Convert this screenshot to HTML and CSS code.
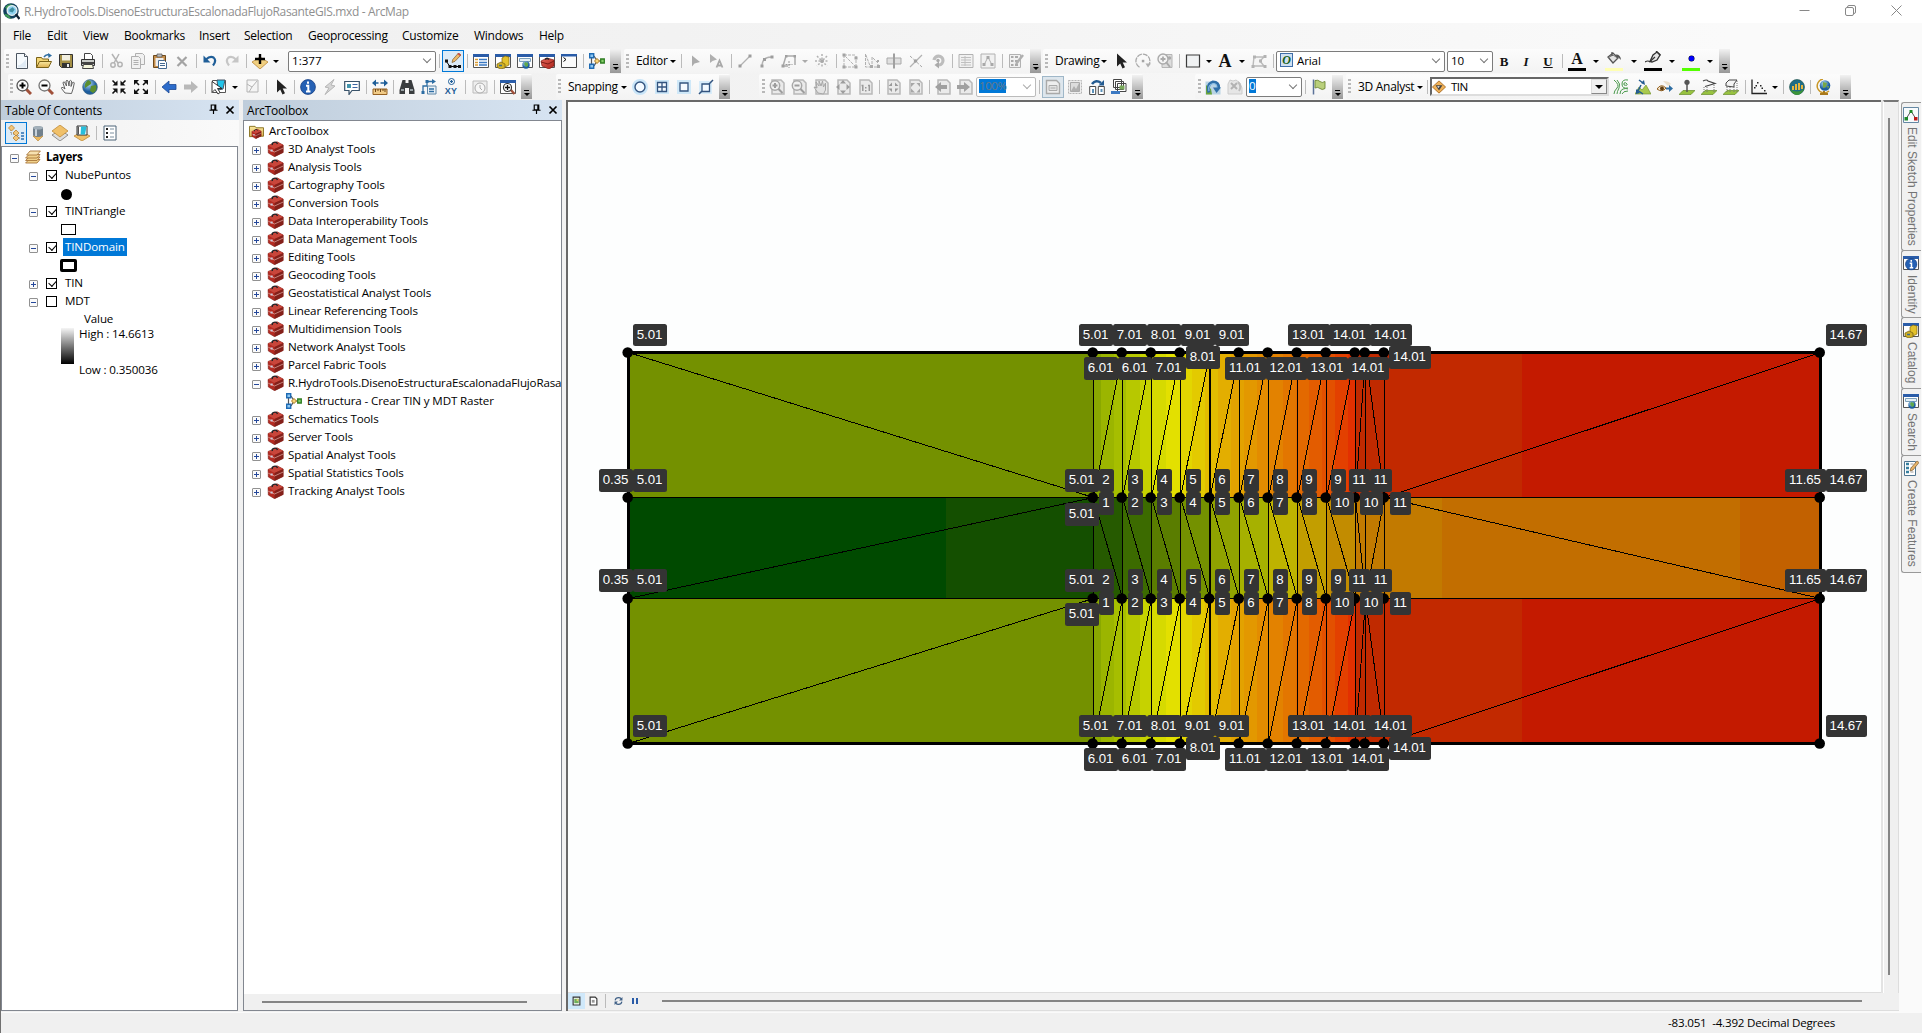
FILE: index.html
```html
<!DOCTYPE html>
<html lang="en">
<head>
<meta charset="utf-8">
<title>R.HydroTools.DisenoEstructuraEscalonadaFlujoRasanteGIS.mxd - ArcMap</title>
<link rel="stylesheet" href="styles.css">
</head>
<body>
<svg class="defs" width="0" height="0">
<defs>
<linearGradient id="gRed" x1="0" y1="0" x2="1" y2="1"><stop offset="0" stop-color="#e8695c"/><stop offset="1" stop-color="#a81f17"/></linearGradient>
<linearGradient id="gGold" x1="0" y1="0" x2="0" y2="1"><stop offset="0" stop-color="#fbeaa0"/><stop offset="1" stop-color="#dcae4e"/></linearGradient>
<radialGradient id="gSea" cx=".4" cy=".3"><stop offset="0" stop-color="#b4dcf5"/><stop offset="1" stop-color="#1c5d9e"/></radialGradient>
</defs>
<symbol id="i-app" viewBox="0 0 16 16"><circle cx="7.5" cy="7.5" r="7.3" fill="#12405e"/><path d="M2 4q4-5 9-1l-3 3-4 1zM1 10l4 1 3 4q-5-1-7-5z" fill="#3d9a55"/><circle cx="8.5" cy="7" r="4.6" fill="#8fd3f0" stroke="#e6eef2" stroke-width="1.2"/><path d="M6 6l3-2 2 2-2 3-3-1z" fill="#3f8ea0"/><path d="M12 10.500l3.500 4.500" stroke="#123" stroke-width="2.200"/></symbol>
<symbol id="i-new" viewBox="0 0 16 16"><path d="M2.500.5h8l3 3v12h-11z" fill="#f6fafd" stroke="#4b5560"/><path d="M10.500.5v3h3" fill="#fff" stroke="#4b5560"/><path d="M4 12q3 1 8-6v8.500H4z" fill="#dfeaf4"/></symbol>
<symbol id="i-open" viewBox="0 0 16 16"><path d="M.5 14.500v-10h5l1 1.500h6v3" fill="#f4d675" stroke="#7a6218"/><path d="M.5 14.500L3.500 8.500h12l-3 6z" fill="url(#gGold)" stroke="#7a6218"/><path d="M8 4q2-3 5-2" stroke="#2d6da3" stroke-width="1.600" fill="none"/><path d="M12 0l4 2.500L12.500 5z" fill="#2d6da3"/></symbol>
<symbol id="i-save" viewBox="0 0 16 16"><path d="M1.500 1.500h13v13h-11l-2-2z" fill="#a49047" stroke="#333"/><path d="M4 2h8v5.500H4z" fill="#f2efe0"/><path d="M4 10h8v4.500H4z" fill="#333"/><path d="M9 11h2v3H9z" fill="#eee"/></symbol>
<symbol id="i-print" viewBox="0 0 16 16"><path d="M4.500 6V.5h6l2 2V6" fill="#fff" stroke="#444"/><path d="M1.500 6.500h13v6h-13z" fill="#c9ccc8" stroke="#333"/><path d="M2 9h12v2H2z" fill="#444"/><path d="M3.500 11.500h9l1 4h-11z" fill="#f5f6dc" stroke="#444"/></symbol>
<symbol id="i-cut" viewBox="0 0 16 16"><path d="M4 1l6 9M11 1L6 10" stroke="#b4b4b4" stroke-width="1.500"/><circle cx="5" cy="12" r="2.200" fill="none" stroke="#b4b4b4" stroke-width="1.500"/><circle cx="12" cy="11.500" r="2.200" fill="none" stroke="#b4b4b4" stroke-width="1.500"/></symbol>
<symbol id="i-copy" viewBox="0 0 16 16"><g fill="#f1f1f1" stroke="#b0b0b0"><path d="M5.500.5h7l2 2v9h-9z"/><path d="M1.500 3.500h7l2 2v10h-9z"/><path d="M3.500 7.500h5M3.500 9.500h5M3.500 11.500h5"/></g></symbol>
<symbol id="i-paste" viewBox="0 0 16 16"><path d="M1.500 2.500h12v12h-12z" fill="#c58e4b" stroke="#6d4a1e"/><path d="M5 1h5v3H5z" fill="#bbb" stroke="#555" stroke-width=".7"/><path d="M3.500 5h8v8h-8z" fill="#eee"/><path d="M6.500 7.500h6l2 2v6h-8z" fill="#fff" stroke="#456a92"/><path d="M8 10.500h5M8 12.500h5" stroke="#456a92"/></symbol>
<symbol id="i-del" viewBox="0 0 16 16"><path d="M3.500 4l9 9M12.500 4l-9 9" stroke="#a3a3a3" stroke-width="2.200"/></symbol>
<symbol id="i-undo" viewBox="0 0 16 16"><path d="M4 6.500q4-4 7.500-2 3.500 3-.5 8" fill="none" stroke="#1f5e98" stroke-width="2.200"/><path d="M1.500 2.500v7h7z" fill="#1f5e98"/></symbol>
<symbol id="i-redo" viewBox="0 0 16 16"><path d="M12 6.500q-4-4-7.500-2-3.500 3 .5 8" fill="none" stroke="#c6c6c6" stroke-width="2.200"/><path d="M14.500 2.500v7h-7z" fill="#c6c6c6"/></symbol>
<symbol id="i-add" viewBox="0 0 16 16"><path d="M0 9l8-5 8 5-8 7z" fill="#f0cf80" stroke="#b07b28" stroke-width=".7"/><path d="M8 1v10M3 6h10" stroke="#000" stroke-width="2.400"/></symbol>
<symbol id="i-sketch" viewBox="0 0 16 16"><path d="M1 8l4 5.500h9.500" fill="none" stroke="#000"/><path d="M0 6.500h3v3H0zM3.500 12h3v3h-3zM8.500 12h3v3h-3zM13 12h3v3h-3z" fill="#111"/><path d="M7 9.500l.8-3L13.500 0 16 2 10 8.300z" fill="#eeb868" stroke="#7b5a2a" stroke-width=".7"/><path d="M13 .5L15.500 2.500" stroke="#c44" stroke-width="1.600"/></symbol>
<symbol id="i-win" viewBox="0 0 16 16"><path d="M.5 1.500h15v13H.5z" fill="#fff" stroke="#555"/><path d="M0 1h16v3H0z" fill="#2a5ca8"/></symbol>
<symbol id="i-toc" viewBox="0 0 16 16"><use href="#i-win"/><path d="M2 6.500h3M2 9.500h3M2 12h3" stroke="#d89b35" stroke-width="1.500"/><path d="M6 6.500h8M6 9.500h8M6 12h8" stroke="#3a78c2" stroke-width="1.300"/></symbol>
<symbol id="i-cat" viewBox="0 0 16 16"><use href="#i-win"/><path d="M7 5l3-2 4 1v8l-4 2-3-1z" fill="#e4c22c" stroke="#7e6510" stroke-width=".7"/><path d="M2 11l4-2 4 2v4l-5 1-3-2z" fill="#d0b024" stroke="#6d5a14" stroke-width=".7"/><path d="M4 12.500h3" stroke="#3d6c8c" stroke-width="1.500"/></symbol>
<symbol id="i-search" viewBox="0 0 16 16"><use href="#i-win"/><path d="M2.500 5.500h11v3h-11z" fill="#e6f0f6" stroke="#7da0ba"/><circle cx="9" cy="12" r="3.700" fill="url(#gSea)"/><path d="M8 9l3 1v3l-2 1-2-3z" fill="#5fa74c"/></symbol>
<symbol id="i-atb" viewBox="0 0 16 16"><use href="#i-win"/><path d="M2 8l6-3 7 2v6l-5 3-7-3z" fill="url(#gRed)" stroke="#7c1c15" stroke-width=".7"/><path d="M2 9l7 2 6-3" fill="none" stroke="#7c1c15"/><path d="M6 6.500q2-2 4 0" fill="none" stroke="#222" stroke-width="1.200"/></symbol>
<symbol id="i-py" viewBox="0 0 16 16"><path d="M.5 1.500h15v13H.5z" fill="#fbfbfb" stroke="#444"/><path d="M0 1h16v2.500H0z" fill="#2a5ca8"/><path d="M2.500 4.500l2.500 2-2.500 2" fill="none" stroke="#000"/></symbol>
<symbol id="i-model" viewBox="0 0 16 16"><path d="M2.500 5v6M5 3l3 4.500M5 13l3-5M9 8h5" stroke="#555" stroke-width="1.200" fill="none"/><path d="M.7.7h4v4h-4zM.7 11.300h4v4h-4z" fill="#8cc6f2" stroke="#1e6bb4" stroke-width="1.400"/><path d="M8 5.500L10.500 8 8 10.500 5.500 8z" fill="#f9d57b" stroke="#a8781c"/><path d="M11.700 6h3.600v4h-3.600z" fill="#85cf6a" stroke="#2f7e22" stroke-width="1.300"/></symbol>
<symbol id="i-garrow" viewBox="0 0 16 16"><path d="M5 2.500v11L7.500 10.500 13 9z" fill="#acacac"/></symbol>
<symbol id="i-garrowA" viewBox="0 0 16 16"><path d="M1 1v9l2.500-2L8 6.500z" fill="#b0b0b0"/><path d="M7.500 14.500L10.500 7.500l3 7M8.500 12.500h4" fill="none" stroke="#a8a8a8" stroke-width="1.800"/></symbol>
<symbol id="i-gline" viewBox="0 0 16 16"><path d="M3 13L13 3" stroke="#b2b2b2" stroke-width="1.300"/><path d="M1.500 11.500h3v3h-3zM11.500 1.500h3v3h-3z" fill="#9d9d9d"/></symbol>
<symbol id="i-garc" viewBox="0 0 16 16"><path d="M3 13Q3 4 13 4" fill="none" stroke="#b2b2b2" stroke-width="1.300"/><path d="M1.500 11.500h3v3h-3zM4 5h3v3H4zM11.500 2.500h3v3h-3z" fill="#9d9d9d"/></symbol>
<symbol id="i-gtrace" viewBox="0 0 16 16"><path d="M2 13L5 3h9v9M2 13h5" fill="none" stroke="#aaa" stroke-width="1.500"/><path d="M.5 11.500h3v3h-3zM4 2h2.500v2.500H4zM12.500 2H15v2.500h-2.500z" fill="#a0a0a0"/><path d="M8 8v7M4.500 11.500h7" stroke="#999" stroke-dasharray="2 1"/></symbol>
<symbol id="i-gspark" viewBox="0 0 16 16"><path d="M8 1v14M1 8h14M3 3l10 10M13 3L3 13" stroke="#b2b2b2" stroke-width="1.500" stroke-dasharray="2 1.500"/><path d="M6.500 6.500h3v3h-3z" fill="#a8a8a8"/></symbol>
<symbol id="i-gtri" viewBox="0 0 16 16"><path d="M2 2v12h12zM2 2h11M14 3v11" fill="none" stroke="#b2b2b2" stroke-dasharray="3 1"/><path d="M.5.5h3v3h-3zM.5 12.500h3v3h-3zM12.500 12.500h3v3h-3zM12.500 3.500h3v3h-3z" fill="#a4a4a4"/></symbol>
<symbol id="i-gtri2" viewBox="0 0 16 16"><path d="M1.500 1v13h5zM8 4v10h6v-4z" fill="#f3f3f3" stroke="#b0b0b0" stroke-dasharray="3 1"/><path d="M6 12h3v3H6zM13 12h3v3h-3zM13 7h2v2h-2z" fill="#aaa"/></symbol>
<symbol id="i-gsplit" viewBox="0 0 16 16"><path d="M1 5h14v6H1z" fill="#e0e0e0" stroke="#a9a9a9"/><path d="M8 .5v15" stroke="#a0a0a0" stroke-width="2"/></symbol>
<symbol id="i-gx" viewBox="0 0 16 16"><path d="M2 14L14 2" stroke="#b2b2b2" stroke-width="1.300"/><path d="M2 3l12 11" stroke="#a8a8a8" stroke-dasharray="3 1.500"/><circle cx="7.500" cy="8" r="1.800" fill="#a0a0a0"/></symbol>
<symbol id="i-grot" viewBox="0 0 16 16"><path d="M4 7a4.500 4.500 0 1 1 5 5" fill="none" stroke="#bdbdbd" stroke-width="3.200"/><circle cx="8" cy="7.500" r="1.700" fill="#aaa"/><path d="M9 8.500v7l-4.500-3.500z" fill="#aaa"/></symbol>
<symbol id="i-gtable" viewBox="0 0 16 16"><path d="M1 1.500h14v13H1z" fill="#f1f1f1" stroke="#b2b2b2"/><path d="M3 4.500h10M3 7h10M3 9.500h10M3 12h10M7 3v10" stroke="#c0c0c0"/></symbol>
<symbol id="i-gvert" viewBox="0 0 16 16"><path d="M1 1h14v14H1z" fill="#f1f1f1" stroke="#b2b2b2"/><path d="M4 12l4-8 4 8" fill="none" stroke="#b0b0b0"/><path d="M2.500 10h3v3h-3zM6.500 3h3v3h-3zM10.500 10h3v3h-3z" fill="#a8a8a8"/></symbol>
<symbol id="i-gform" viewBox="0 0 16 16"><path d="M1.500 1.500h11v13h-11z" fill="#f1f1f1" stroke="#b2b2b2"/><path d="M3 4h2.500M3 8h2.500M3 12h2.500M7 4h3M7 8h3M7 12h3" stroke="#aaa" stroke-width="2"/><path d="M8 11L15 2" stroke="#b0b0b0" stroke-width="2.500"/></symbol>
<symbol id="i-ptr" viewBox="0 0 16 16"><path d="M4 .5v13l3.200-3 2.300 5 2.500-1.200L9.700 9.500H14z" fill="#222"/></symbol>
<symbol id="i-drot" viewBox="0 0 16 16"><path d="M4.500 14.200A7 7 0 1 1 14.300 11" fill="none" stroke="#a9a9a9" stroke-width="1.300" stroke-dasharray="5 1"/><path d="M6.800 6.800h2.500v2.500H6.800z" fill="#a5a5a5"/><path d="M10.500 10.500h5.500l-3 4z" fill="#b0b0b0"/></symbol>
<symbol id="i-dzoom" viewBox="0 0 16 16"><path d="M5 1.500h10v13H5z" fill="#ddd" stroke="#b5b5b5"/><circle cx="6" cy="6" r="5" fill="#f4f4f4" stroke="#aaa" stroke-width="1.400"/><path d="M6 3.500v5M3.500 6h5" stroke="#aaa" stroke-width="1.800"/><path d="M9 9l4 5" stroke="#aaa" stroke-width="2"/><circle cx="12.500" cy="5" r="1.700" fill="#aaa"/></symbol>
<symbol id="i-rect" viewBox="0 0 16 16"><path d="M1.500 2h13v12h-13z" fill="#f0f2f3" stroke="#3b3b3b" stroke-width="1.200"/></symbol>
<symbol id="i-dpoly" viewBox="0 0 16 16"><path d="M3 4h10L9 8l4 5H2z" fill="#f5f5f5" stroke="#bbb" stroke-width="1.400"/><path d="M2 2.500h3v3H2zM12.500 2h3v3h-3zM8 6.500h3v3H8zM.5 12h3v3h-3zM12.500 12h3v3h-3z" fill="#b3b3b3"/></symbol>
<symbol id="i-bucket" viewBox="0 0 16 14"><path d="M2 6l5-4 5 5-5 5z" fill="#e4e4e4" stroke="#555" stroke-width="1.300"/><path d="M2.500 6.500L7 4l4.500 3" fill="none" stroke="#777"/><path d="M6 5V1" stroke="#555" stroke-width="1.300"/><path d="M9.500 3.500q5-.5 5.500 5.500Q12.500 6 11 6z" fill="#555"/></symbol>
<symbol id="i-pen" viewBox="0 0 16 14"><path d="M0 11q3-2 5 0" fill="none" stroke="#333" stroke-width="1.200"/><path d="M5 10.500L8 4l4-3 3 3-3 5-5 2z" fill="#e5e5e5" stroke="#333" stroke-width="1.300"/><path d="M5 10.500L10 6M11 0l4.500 4" stroke="#333" stroke-width="1.200"/></symbol>
<symbol id="i-zin" viewBox="0 0 16 16"><path d="M10 10l5 5" stroke="#a0503a" stroke-width="3"/><circle cx="6.500" cy="6.500" r="5.500" fill="#fcfcfc" stroke="#555" stroke-width="1.300"/><path d="M6.500 3.500v6M3.500 6.500h6" stroke="#000" stroke-width="2"/></symbol>
<symbol id="i-zout" viewBox="0 0 16 16"><path d="M10 10l5 5" stroke="#a0503a" stroke-width="3"/><circle cx="6.500" cy="6.500" r="5.500" fill="#fcfcfc" stroke="#777" stroke-width="1.300"/><path d="M3.500 6.500h6" stroke="#000" stroke-width="2"/></symbol>
<symbol id="i-hand" viewBox="0 0 16 16"><path d="M5 14L1.500 9.500Q1 8 3 8.500L5 10 3 4q0-1.500 1.500-1L6.500 7 6 2q1-1.500 2 0l1 5 .5-5q1-1.200 2 0L11 7.500l1.500-4q1.500-.8 1.800.5L13 10l-1.500 4.500z" fill="#fafafa" stroke="#555" stroke-width=".9"/></symbol>
<symbol id="i-globe" viewBox="0 0 16 16"><circle cx="8" cy="8" r="7.400" fill="url(#gSea)" stroke="#42657e" stroke-width=".6"/><path d="M6 1q4 1 3 4L6 7 3 9Q2 4 6 1zM9 7l5-1q2 5-3 8l-3-2z" fill="#5c8f2e"/></symbol>
<symbol id="i-in4" viewBox="0 0 16 16"><path d="M1.500 1.500l4 4M14.500 1.500l-4 4M1.500 14.500l4-4M14.500 14.500l-4-4" stroke="#111" stroke-width="1.600"/><path d="M6.500 1.500v5h-5zM9.500 1.500v5h5zM6.500 14.500v-5h-5zM9.500 14.500v-5h5z" fill="#111"/></symbol>
<symbol id="i-out4" viewBox="0 0 16 16"><path d="M2 2l4 4M14 2l-4 4M2 14l4-4M14 14l-4-4" stroke="#111" stroke-width="1.600"/><path d="M1 6V1h5zM15 6V1h-5zM1 10v5h5zM15 10v5h-5z" fill="#111"/></symbol>
<symbol id="i-back" viewBox="0 0 16 16"><path d="M1 8l7-6v3.500h7v5H8V14z" fill="#2c6ccb" stroke="#1c4792" stroke-width=".8"/></symbol>
<symbol id="i-fwd" viewBox="0 0 16 16"><path d="M15 8L8 2v3.500H1v5h7V14z" fill="#b9b9b9"/></symbol>
<symbol id="i-sel" viewBox="0 0 16 16"><path d="M1.500 1.500h13v12h-13z" fill="#fff" stroke="#555"/><path d="M6 1h8l-2 9-5 1z" fill="#22c4ea" stroke="#456"/><path d="M1 2.500v11l3-3 3 4.500 2-1.500L6.500 9.500H11z" fill="#fff" stroke="#222" stroke-width=".9"/></symbol>
<symbol id="i-clear" viewBox="0 0 16 16"><path d="M3 1h11v12H3zM3 5l5 3 5-6M8 8l-3 5" fill="#f4f4f4" stroke="#b4b4b4"/></symbol>
<symbol id="i-info" viewBox="0 0 16 16"><circle cx="8" cy="8" r="7.400" fill="#2561b4" stroke="#163f83" stroke-width=".8"/><path d="M8 2.500v2.200M6 6.700h2.300V12M6 12.500h4.500" stroke="#fff" stroke-width="2" fill="none"/></symbol>
<symbol id="i-bolt" viewBox="0 0 16 16"><path d="M12 .5L3 8l4 1-4 6.500L13 7 9 6z" fill="#d5d5d5" stroke="#b5b5b5"/></symbol>
<symbol id="i-popup" viewBox="0 0 16 16"><path d="M.7 2.500h14.600v9H8l-3 4v-4H.7z" fill="#fff" stroke="#39536a" stroke-width="1.200"/><path d="M3 5h4v4H3z" fill="#4295ad"/><path d="M8.500 5.500h5M8.500 8.500h5" stroke="#3b66a5"/></symbol>
<symbol id="i-measure" viewBox="0 0 16 16"><path d="M1 10h14v5.500H1z" fill="#f0ca86" stroke="#956021"/><path d="M3.500 10v3M6 10v2M8.500 10v3M11 10v2M13 10v3" stroke="#6d4618"/><path d="M0 4l4-3.500v7zM16 4l-4-3.500v7z" fill="#1f5e98"/><path d="M3 4h10" stroke="#1f5e98" stroke-width="1.500" stroke-dasharray="3.500 2"/></symbol>
<symbol id="i-binoc" viewBox="0 0 16 16"><path d="M3.500 1h3v3h3V1h3l3 10v4h-5.500V9h-4v6H.5v-4z" fill="#3a3d3f"/><path d="M2 11h3M11 11h3" stroke="#b8c2c8" stroke-width="1.500"/></symbol>
<symbol id="i-route" viewBox="0 0 16 16"><path d="M6.500 7h8.500v8H6.500z" fill="#e9f1f7" stroke="#5e86a6"/><path d="M2 13V7h4V2.500h6M8 10h5M8 12.500h5" fill="none" stroke="#2d6da3" stroke-width="1.300"/><path d="M.5 12h3v3h-3zM4.500 1h3v3h-3zM11 0l4 2.500L11 5z" fill="#2d6da3"/></symbol>
<symbol id="i-clock" viewBox="0 0 16 16"><path d="M1 2h14v12H1z" fill="#eee" stroke="#bcbcbc"/><circle cx="8" cy="9" r="5" fill="#f7f7f7" stroke="#ababab"/><path d="M8 6v3l2 2" fill="none" stroke="#ababab"/></symbol>
<symbol id="i-viewer" viewBox="0 0 16 16"><use href="#i-win"/><path d="M10 10l4.500 5" stroke="#a0503a" stroke-width="2.500"/><circle cx="7.500" cy="8.500" r="4" fill="#fff" stroke="#333" stroke-width="1.200"/><path d="M7.500 6v5M5 8.500h5" stroke="#111" stroke-width="1.300"/></symbol>
<symbol id="i-snc" viewBox="0 0 16 16"><circle cx="8" cy="8" r="6" fill="none" stroke="#c9e5f8" stroke-width="4"/><circle cx="8" cy="8" r="5" fill="#f4faff" stroke="#33547f" stroke-width="1.400"/></symbol>
<symbol id="i-sne" viewBox="0 0 16 16"><path d="M1 1h14v14H1z" fill="#cfe8f8"/><path d="M3.500 3.500h9v9h-9zM8 3v10M3 8h10" fill="#f4faff" stroke="#33547f" stroke-width="1.300"/></symbol>
<symbol id="i-snv" viewBox="0 0 16 16"><path d="M1 1h14v14H1z" fill="#cfe8f8"/><path d="M4 4h8v8H4z" fill="#f4faff" stroke="#33547f" stroke-width="1.300"/></symbol>
<symbol id="i-sng" viewBox="0 0 16 16"><path d="M1 2h13v13H1z" fill="#d8ecf9"/><path d="M4 5h7.500v7.500H4z" fill="#f4faff" stroke="#33547f" stroke-width="1.300"/><path d="M1 15l3-3M11 5l4-4" stroke="#33547f" stroke-width="1.500"/></symbol>
<symbol id="i-page" viewBox="0 0 16 16"><path d="M3 1h9l3 3v11H3z" fill="#eaeaea" stroke="#b8b8b8" stroke-width="1.500"/></symbol>
<symbol id="i-pzin" viewBox="0 0 16 16"><use href="#i-page"/><circle cx="6" cy="6.500" r="4.700" fill="#f2f2f2" stroke="#a8a8a8" stroke-width="1.500"/><path d="M6 4v5M3.500 6.500h5M9.500 10l4 4" stroke="#9d9d9d" stroke-width="2"/></symbol>
<symbol id="i-pzout" viewBox="0 0 16 16"><use href="#i-page"/><circle cx="6" cy="6.500" r="4.700" fill="#f2f2f2" stroke="#a8a8a8" stroke-width="1.500"/><path d="M3.500 6.500h5M9.500 10l4 4" stroke="#9d9d9d" stroke-width="2"/></symbol>
<symbol id="i-phand" viewBox="0 0 16 16"><use href="#i-page"/><path d="M5 14L1 8l3 1-1-6 3 4V2l2 5 1.500-5 1 6 2-4v7l-2 4z" fill="#e3e3e3" stroke="#a6a6a6"/></symbol>
<symbol id="i-pfull" viewBox="0 0 16 16"><use href="#i-page"/><path d="M8 1l3 3.500H5zM8 15l3-3.500H5zM1 8l3.500-3v6zM15 8l-3.500-3v6z" fill="#9d9d9d"/></symbol>
<symbol id="i-p11" viewBox="0 0 16 16"><use href="#i-page"/><path d="M4.500 6.500h1.300V12M11 6.500h1.300V12" fill="none" stroke="#999" stroke-width="1.500"/><path d="M8 8h1.500v1.500H8zM8 11h1.500v1.500H8z" fill="#999"/></symbol>
<symbol id="i-pin" viewBox="0 0 16 16"><use href="#i-page"/><path d="M7 3.500V7H3.500zM10 3.500V7h3.500zM7 13v-3.500H3.500zM10 13v-3.500h3.500z" fill="#999"/></symbol>
<symbol id="i-pout" viewBox="0 0 16 16"><use href="#i-page"/><path d="M4 8V4h4zM13 8V4H9.500zM4 9.500v4h4zM13 9.500v4H9.500z" fill="#a6a6a6"/></symbol>
<symbol id="i-pback" viewBox="0 0 16 16"><use href="#i-page"/><path d="M0 8l6-5v3h6v4H6v3z" fill="#a0a0a0"/></symbol>
<symbol id="i-pfwd" viewBox="0 0 16 16"><use href="#i-page"/><path d="M13 8L7 3v3H0v4h7v3z" fill="#a0a0a0"/></symbol>
<symbol id="i-draft" viewBox="0 0 16 16"><path d="M1.500 1.500h10l3 3v10h-13z" fill="#eee" stroke="#a9a9a9" stroke-width="1.400"/><path d="M4 6.500h8v5H4zM5.500 9h5" fill="#e3e3e3" stroke="#aaa"/></symbol>
<symbol id="i-focus" viewBox="0 0 16 16"><path d="M1.500 1.500h13v13h-13z" fill="#eee" stroke="#b5b5b5" stroke-dasharray="2 1"/><path d="M3.500 3.500h9v9h-9z" fill="#ddd" stroke="#aaa"/><path d="M4 12l3-5 2 3 3-6v8z" fill="#b0b0b0"/></symbol>
<symbol id="i-swap" viewBox="0 0 16 16"><path d="M.7 7.500h6v8h-6zM9.300 7.500h6v8h-6z" fill="#fff" stroke="#4a4a4a"/><path d="M3 10h2v4H3zM11.500 10h2v3h-2z" fill="#5b91b9"/><path d="M3 5q4-5 9-1" fill="none" stroke="#235b91" stroke-width="2.600"/><path d="M9.500 6.500h5.500V1z" fill="#235b91"/></symbol>
<symbol id="i-ddp" viewBox="0 0 16 16"><g fill="#fff" stroke="#454545"><path d="M2.500.5h8v8h-8zM4.500 2.500h8v8h-8zM6.500 4.500h8.500v8H6.500z"/></g><path d="M8.500 6.500h5v4h-5z" fill="#78a85a"/><path d="M0 12h9v3H0z" fill="#3a78c2"/></symbol>
<symbol id="i-refresh" viewBox="0 0 16 16"><path d="M.5 2.500h9l6 6v7H.5z" fill="#b9d3e4"/><path d="M1 6l5 4 1 5.500H1z" fill="#6ba53a"/><path d="M4 13.500Q1.500 5 8 3q6 0 5.500 6" fill="none" stroke="#2f6fa8" stroke-width="3"/><path d="M4 12Q2.500 6 8 4.500q4 0 4 4.500" fill="none" stroke="#8cc0e6" stroke-width="1.200"/><path d="M8 8.500h8L11.500 14z" fill="#2f6fa8"/></symbol>
<symbol id="i-grefresh" viewBox="0 0 16 16"><path d="M3 1l3 1 3-1 4 3 2 5v6H1V5z" fill="#e6e6e6" stroke="#ccc"/><path d="M4 4l6 6M10 4l-6 6" stroke="#b2b2b2" stroke-width="2"/><path d="M11 3q4 4 1 9" fill="none" stroke="#bdbdbd" stroke-width="2"/></symbol>
<symbol id="i-flag" viewBox="0 0 16 16"><path d="M2.500.5v15" stroke="#5b7299" stroke-width="1.500"/><path d="M4 1.500q3-1 5 1t5 0v7q-3 2-5 0t-5-.5z" fill="#b9cf7b" stroke="#6e8836" stroke-width=".9"/></symbol>
<symbol id="i-layer" viewBox="0 0 16 16"><path d="M8 1l7.500 7L8 15 .5 8z" fill="#f0b157" stroke="#a7671c"/><path d="M4 6h8l-4 6z" fill="#444"/><path d="M6 7l3 0-2 2z" fill="#fff"/></symbol>
<symbol id="i-contour" viewBox="0 0 16 16"><path d="M1 1q6 5 3 8t-3 6M4 1q4 4 2 8t-2 6M15 1q-6-1-6 4t6 4M15 12q-5 0-6 3M7 15q0-4 3-5t5 0M11 4q2-1 3 1t-3 1z" fill="none" stroke="#4b9a4d"/></symbol>
<symbol id="i-steep" viewBox="0 0 16 16"><path d="M0 15L4 8l3 3 4-5 5 9z" fill="#a9c94e" stroke="#6a8b21" stroke-width=".6"/><path d="M4 1l4 3M8 15l-6-4M6 6l-3 6" stroke="#235b91" stroke-width="1.500"/><path d="M10 6L6 4l3-3zM1 15v-5l4 4z" fill="#235b91"/></symbol>
<symbol id="i-los" viewBox="0 0 16 16"><path d="M6 2q6 0 8 3l-3 2z" fill="#eadfcc"/><path d="M0 10q4-6 9-1-4 5-9 1z" fill="#f4e5cd" stroke="#93601e"/><circle cx="5" cy="9.500" r="2" fill="#614014"/><path d="M9 8.500h3V6l4 3.500-4 3.500v-2.500H9z" fill="#2d6da3"/></symbol>
<symbol id="i-ipt" viewBox="0 0 16 16"><path d="M0 15.500l4-4h12l-4 4z" fill="#97c23f" stroke="#557d17" stroke-width=".6"/><path d="M8 5v8" stroke="#555" stroke-width="1.500"/><circle cx="8" cy="3.300" r="2.600" fill="#555"/></symbol>
<symbol id="i-iline" viewBox="0 0 16 16"><path d="M0 15.500l4-4h12l-4 4z" fill="#97c23f" stroke="#557d17" stroke-width=".6"/><path d="M2 2q4-2 5 0l7 2.500-10 3" fill="none" stroke="#444" stroke-width="1.200"/><path d="M3 8v5M6 8v5M13 6v7" stroke="#777" stroke-dasharray="1 1"/></symbol>
<symbol id="i-ipoly" viewBox="0 0 16 16"><path d="M0 15.500l4-4h12l-4 4z" fill="#97c23f" stroke="#557d17" stroke-width=".6"/><path d="M3 7V4l3-3h8l-3 4v3z" fill="#f4f4f4" stroke="#444"/><path d="M4 8v5M7 8v5M11 8v5M14 2v11" stroke="#777" stroke-dasharray="1 1"/></symbol>
<symbol id="i-scatter" viewBox="0 0 16 16"><path d="M1 .5V14.500h15" fill="none" stroke="#222" stroke-width="1.300"/><path d="M3 8h1.500v1.500H3zM6 3h1.500v1.500H6zM9 6h1.500v1.500H9zM10.500 8.500H12V10h-1.500zM13 11h1.500v1.500H13zM4.500 6H6v1.500H4.500z" fill="#222"/></symbol>
<symbol id="i-scene" viewBox="0 0 16 16"><circle cx="8" cy="8" r="7.500" fill="#1e6c86" stroke="#174c41" stroke-width=".6"/><path d="M1 10q7 5 14 0-3 6-7 6T1 10z" fill="#3b9439"/><path d="M3 7h2v4H3zM6 5h2v6H6zM9 4h2v7H9zM12 6h2v4h-2z" fill="#e8b63e"/></symbol>
<symbol id="i-gl" viewBox="0 0 16 16"><path d="M7 0A7 7 0 1 0 13 12" fill="none" stroke="#c99828" stroke-width="1.500"/><circle cx="9" cy="6.500" r="5.300" fill="url(#gSea)"/><path d="M7 3l4 1-1 4-3 1zM11 7l2 0-1 3z" fill="#77a747"/><path d="M7 12h2v2h3v2H4v-2h3z" fill="#a9791c"/></symbol>
<symbol id="i-tb" viewBox="0 0 16 16"><path d="M.5 4.500L9.500.8 15.700 4v7.500L7 15.700.8 12z" fill="#b52a21" stroke="#6e1611" stroke-width=".5"/><path d="M.5 4.500L9.500.8 15.700 4 7 8z" fill="#c9463b"/><path d="M7 8l8.700-4v7.500L7 15.700z" fill="#84201a"/><path d="M.7 8.200L7 11l8.700-4" fill="none" stroke="#e2b0a8" stroke-width=".7"/><path d="M5 4q-1-2 1.500-2.700T10 3" fill="none" stroke="#1f2226" stroke-width="1.400"/><path d="M3 8.500h2.200v2H3z" fill="#ccd"/></symbol>
<symbol id="i-tbroot" viewBox="0 0 16 16"><path d="M.5 13.500v-11h6l1 1.500h8v9z" fill="url(#gGold)" stroke="#86701f"/><g transform="translate(2.500 5) scale(.68)"><use href="#i-tb" width="16" height="16"/></g></symbol>
<symbol id="i-lorder" viewBox="0 0 16 16"><path d="M3 5v4h7v4h2" fill="none" stroke="#777" stroke-dasharray="1 1"/><path d="M3.500 0l3 3-3 3-3-3zM8 5l3 3-3 3-3-3zM8 10l3 3-3 3-3-3z" fill="#f2c67a" stroke="#b98130" stroke-width=".8"/><path d="M13 8h3M13 11h3M13 14h3" stroke="#2a6fb2" stroke-width="1.400"/></symbol>
<symbol id="i-lsrc" viewBox="0 0 16 16"><path d="M3 11l5 5 5-5z" fill="#eab75d" stroke="#b98130" stroke-width=".6"/><path d="M3 2.500q5-3 10 0v8q-5 3-10 0z" fill="#71808c"/><path d="M5 4h2v7H5z" fill="#c8d2da"/><ellipse cx="8" cy="2.800" rx="5" ry="1.800" fill="#a3b0ba"/></symbol>
<symbol id="i-lvis" viewBox="0 0 16 16"><path d="M0 10l8-5 8 5-8 6z" fill="#ddd" stroke="#777" stroke-width=".8"/><path d="M0 6l8-6 8 6-8 6z" fill="#f0c069" stroke="#c08a36" stroke-width=".8"/></symbol>
<symbol id="i-lsel" viewBox="0 0 16 16"><path d="M0 11l8-4 8 4-8 5z" fill="#f0c069" stroke="#c08a36" stroke-width=".8"/><path d="M3 1h10v9H3z" fill="#fff" stroke="#333"/><path d="M3.500 1.500H5v8H3.500z" fill="#555"/><path d="M7 1.500h5.500l-1.500 8H6.500z" fill="#27bfdc"/></symbol>
<symbol id="i-lopt" viewBox="0 0 16 16"><path d="M2 1h12v14H2z" fill="#fff" stroke="#4d6478"/><path d="M4 4h2M4 8h2M4 12h2" stroke="#222" stroke-width="2"/><path d="M8 4h4M8 8h4M8 12h4" stroke="#7c8f9f" stroke-width="1.200"/></symbol>
<symbol id="i-layers" viewBox="0 0 16 14"><g fill="#f1d28c" stroke="#a9763a" stroke-width=".9"><path d="M.6 13L4 9.500h11L12 13z"/><path d="M.6 10.500L4 7h11l-3 3.500z"/><path d="M.6 8L4 4.500h11L12 8z"/><path d="M1.600 5L5 1h10.400L12 5z" fill="#f7e2b0"/></g></symbol>
<symbol id="i-idw" viewBox="0 0 16 16"><use href="#i-win"/><g transform="translate(2 3) scale(.78)"><use href="#i-info" width="16" height="16"/></g></symbol>
<symbol id="i-edsk" viewBox="0 0 16 16"><path d="M.5.5h15v15H.5z" fill="#f8fbfd" stroke="#6588a3"/><path d="M3 12l5-8 5 8" fill="none" stroke="#555"/><path d="M1.500 10h3.500v3.500H1.500zM6.500 3h3v3h-3z" fill="#1d8a2a"/><path d="M11 10h3.500v3.500H11z" fill="#c01818"/></symbol>
<symbol id="i-cf" viewBox="0 0 16 16"><path d="M1.500 1.500h11v14h-11z" fill="#fff" stroke="#4f7590"/><path d="M3 4h3M3 8h3M3 12h3" stroke="#377f9f" stroke-width="2.400"/><path d="M7.500 4h3M7.500 8h3M7.500 12h3" stroke="#999"/><path d="M7 11l1-3 6-7 2 1.500L10 10z" fill="#e7b46a" stroke="#7c5b31" stroke-width=".7"/></symbol>
<symbol id="i-dv" viewBox="0 0 16 16"><path d="M2 1h12v14H2z" fill="#fff" stroke="#333" stroke-width="2"/><path d="M4 4h8v8H4z" fill="#6fae5a"/><path d="M7 6l4-2v5z" fill="#f3d36b"/></symbol>
<symbol id="i-lv" viewBox="0 0 16 16"><path d="M2 1h9l3 3v11H2z" fill="#fff" stroke="#333" stroke-width="2"/><path d="M5 6h5v5H5z" fill="#999"/></symbol>
<symbol id="i-ref" viewBox="0 0 16 16"><path d="M2 7q1-5 6-5 3 0 5 2M14 9q-1 5-6 5-3 0-5-2" fill="none" stroke="#3e5f86" stroke-width="2"/><path d="M15 1v6H9zM1 15V9h6z" fill="#3e5f86"/></symbol>
<symbol id="i-pinh" viewBox="0 0 10 12"><path d="M2.500 1h5v5.500h-5zM6.500 1v5.500M0.500 6.800h9M5 7v4" fill="none" stroke="#000" stroke-width="1.300"/></symbol>
<symbol id="i-x" viewBox="0 0 10 10"><path d="M1.500 1.500l7 7M8.500 1.500l-7 7" stroke="#000" stroke-width="1.700"/></symbol>
</svg>

<div class="window">
  <header class="titlebar">
    <svg class="appicon"><use href="#i-app"/></svg>
    <span class="title">R.HydroTools.DisenoEstructuraEscalonadaFlujoRasanteGIS.mxd - ArcMap</span>
    <div class="winbtns">
      <svg viewBox="0 0 11 11"><path d="M.5 5.500h10"/></svg>
      <svg viewBox="0 0 11 11"><rect x=".5" y="2.500" width="8" height="8" rx="1.500"/><path d="M2.500 2.500V2q0-1.500 1.500-1.500h5q1.500 0 1.500 1.500v5q0 1.500-1.500 1.500h-.5"/></svg>
      <svg viewBox="0 0 11 11"><path d="M.5.5l10 10M10.500.5l-10 10"/></svg>
    </div>
  </header>
  <nav class="menu"><span class="m1">File</span><span class="m2">Edit</span><span class="m3">View</span><span class="m4">Bookmarks</span><span class="m5">Insert</span><span class="m6">Selection</span><span class="m7">Geoprocessing</span><span class="m8">Customize</span><span class="m9">Windows</span><span>Help</span></nav>

  <div class="row row1">
    <div class="tb t11"><i class="grip"></i>
      <svg class="b"><use href="#i-new"/></svg><svg class="b"><use href="#i-open"/></svg><svg class="b"><use href="#i-save"/></svg><svg class="b"><use href="#i-print"/></svg><i class="s"></i>
      <svg class="b"><use href="#i-cut"/></svg><svg class="b"><use href="#i-copy"/></svg><svg class="b"><use href="#i-paste"/></svg><svg class="b"><use href="#i-del"/></svg><i class="s"></i>
      <svg class="b"><use href="#i-undo"/></svg><svg class="b"><use href="#i-redo"/></svg><i class="s"></i>
      <svg class="b"><use href="#i-add"/></svg><i class="c"></i>
      <div class="combo scale"><span>1:377</span><i class="chev"></i></div><i class="s"></i>
      <svg class="b on"><use href="#i-sketch"/></svg><i class="s"></i>
      <svg class="b"><use href="#i-toc"/></svg><svg class="b"><use href="#i-cat"/></svg><svg class="b"><use href="#i-search"/></svg><svg class="b"><use href="#i-atb"/></svg><svg class="b"><use href="#i-py"/></svg><i class="s"></i>
      <svg class="b"><use href="#i-model"/></svg><i class="ov"></i></div>
    <div class="tb t12"><i class="grip"></i><span class="lbl editor">Editor</span><i class="c"></i><i class="s"></i>
      <svg class="b"><use href="#i-garrow"/></svg><svg class="b"><use href="#i-garrowA"/></svg><i class="s"></i>
      <svg class="b"><use href="#i-gline"/></svg><svg class="b"><use href="#i-garc"/></svg><svg class="b"><use href="#i-gtrace"/></svg><i class="c off"></i>
      <svg class="b g2"><use href="#i-gspark"/></svg><i class="s"></i>
      <svg class="b"><use href="#i-gtri"/></svg><svg class="b"><use href="#i-gtri2"/></svg><svg class="b"><use href="#i-gsplit"/></svg><svg class="b"><use href="#i-gx"/></svg><svg class="b"><use href="#i-grot"/></svg><i class="s"></i>
      <svg class="b"><use href="#i-gtable"/></svg><svg class="b"><use href="#i-gvert"/></svg><i class="s"></i>
      <svg class="b"><use href="#i-gform"/></svg><i class="ov"></i></div>
    <div class="tb t13"><i class="grip"></i><span class="lbl drawing">Drawing</span><i class="c"></i>
      <svg class="b g1"><use href="#i-ptr"/></svg><svg class="b"><use href="#i-drot"/></svg><svg class="b"><use href="#i-dzoom"/></svg><i class="s"></i>
      <svg class="b"><use href="#i-rect"/></svg><i class="c"></i>
      <span class="b ltr big">A</span><i class="c g1"></i><svg class="b g1"><use href="#i-dpoly"/></svg><i class="s"></i>
      <div class="combo font"><b class="otf">O</b><span>Arial</span><i class="chev"></i></div>
      <div class="combo size"><span>10</span><i class="chev"></i></div>
      <span class="b ltr">B</span><span class="b ltr it">I</span><span class="b ltr un">U</span><i class="s"></i>
      <span class="b ltr clr black g1">A</span><i class="c g3"></i>
      <span class="b clr yellow g2"><svg><use href="#i-bucket"/></svg></span><i class="c g4"></i>
      <span class="b clr black g3"><svg><use href="#i-pen"/></svg></span><i class="c g3"></i>
      <span class="b clr green g3"><i class="bluedot"></i></span><i class="c g3"></i><i class="ov g4"></i></div>
  </div>

  <div class="row row2">
    <div class="tb t21"><i class="grip"></i>
      <svg class="b"><use href="#i-zin"/></svg><svg class="b"><use href="#i-zout"/></svg><svg class="b"><use href="#i-hand"/></svg><svg class="b"><use href="#i-globe"/></svg><i class="s w7"></i>
      <svg class="b"><use href="#i-in4"/></svg><svg class="b"><use href="#i-out4"/></svg><i class="s"></i>
      <svg class="b"><use href="#i-back"/></svg><svg class="b"><use href="#i-fwd"/></svg><i class="s"></i>
      <svg class="b"><use href="#i-sel"/></svg><i class="c"></i><svg class="b g2"><use href="#i-clear"/></svg><i class="s w7"></i>
      <svg class="b"><use href="#i-ptr"/></svg><i class="s w5"></i>
      <svg class="b"><use href="#i-info"/></svg><svg class="b"><use href="#i-bolt"/></svg><svg class="b"><use href="#i-popup"/></svg><i class="s"></i>
      <svg class="b"><use href="#i-measure"/></svg><i class="s w5"></i>
      <svg class="b"><use href="#i-binoc"/></svg><svg class="b"><use href="#i-route"/></svg><span class="b xy"><i></i>XY</span><i class="s w7"></i>
      <svg class="b"><use href="#i-clock"/></svg><i class="s"></i>
      <svg class="b"><use href="#i-viewer"/></svg><i class="ov"></i></div>
    <div class="tb t22"><i class="grip"></i><span class="lbl snapping">Snapping</span><i class="c"></i>
      <svg class="b"><use href="#i-snc"/></svg><svg class="b"><use href="#i-sne"/></svg><svg class="b"><use href="#i-snv"/></svg><svg class="b"><use href="#i-sng"/></svg><i class="ov g1"></i></div>
    <div class="tb t23"><i class="grip"></i>
      <svg class="b"><use href="#i-pzin"/></svg><svg class="b"><use href="#i-pzout"/></svg><svg class="b"><use href="#i-phand"/></svg><svg class="b"><use href="#i-pfull"/></svg><svg class="b"><use href="#i-p11"/></svg><i class="s"></i>
      <svg class="b"><use href="#i-pin"/></svg><svg class="b"><use href="#i-pout"/></svg><i class="s"></i>
      <svg class="b"><use href="#i-pback"/></svg><svg class="b"><use href="#i-pfwd"/></svg>
      <div class="combo pct"><span class="hl">100%</span><i class="chev"></i></div><i class="s"></i>
      <svg class="b on dim"><use href="#i-draft"/></svg><svg class="b"><use href="#i-focus"/></svg><svg class="b"><use href="#i-swap"/></svg><svg class="b"><use href="#i-ddp"/></svg><i class="ov"></i></div>
    <div class="tb t24"><i class="grip"></i>
      <svg class="b"><use href="#i-refresh"/></svg><svg class="b"><use href="#i-grefresh"/></svg>
      <div class="combo num"><span class="hl">0</span><i class="chev"></i></div><i class="s"></i>
      <svg class="b"><use href="#i-flag"/></svg><i class="ov"></i></div>
    <div class="tb t25"><i class="grip"></i><span class="lbl analyst">3D Analyst</span><i class="c"></i><i class="s"></i>
      <div class="combo tin"><svg><use href="#i-layer"/></svg><span>TIN</span><i class="drop"></i></div>
      <svg class="b g1"><use href="#i-contour"/></svg><svg class="b"><use href="#i-steep"/></svg><svg class="b"><use href="#i-los"/></svg><svg class="b"><use href="#i-ipt"/></svg><svg class="b"><use href="#i-iline"/></svg><svg class="b"><use href="#i-ipoly"/></svg><i class="s"></i>
      <svg class="b"><use href="#i-scatter"/></svg><i class="c"></i><i class="s g1"></i>
      <svg class="b"><use href="#i-scene"/></svg><i class="s w5"></i>
      <svg class="b"><use href="#i-gl"/></svg><i class="ov g1"></i></div>
  </div>

  <main class="work">
    <section class="panel toc">
      <h2>Table Of Contents<svg class="pin"><use href="#i-pinh"/></svg><svg class="x"><use href="#i-x"/></svg></h2>
      <div class="toctools">
        <svg class="b on"><use href="#i-lorder"/></svg><svg class="b"><use href="#i-lsrc"/></svg><svg class="b"><use href="#i-lvis"/></svg><svg class="b"><use href="#i-lsel"/></svg><i class="s"></i><svg class="b"><use href="#i-lopt"/></svg>
      </div>
      <div class="tree">
        <div class="tr root"><i class="tg minus"></i><svg class="lyr"><use href="#i-layers"/></svg><b>Layers</b></div>
        <div class="tr"><i class="tg minus"></i><i class="ck on"></i><span>NubePuntos</span></div>
        <div class="tr sym"><i class="dot"></i></div>
        <div class="tr"><i class="tg minus"></i><i class="ck on"></i><span>TINTriangle</span></div>
        <div class="tr sym"><i class="box"></i></div>
        <div class="tr"><i class="tg minus"></i><i class="ck on"></i><span class="selrow">TINDomain</span></div>
        <div class="tr sym"><i class="box thick"></i></div>
        <div class="tr"><i class="tg"></i><i class="ck on"></i><span>TIN</span></div>
        <div class="tr"><i class="tg minus"></i><i class="ck"></i><span>MDT</span></div>
        <div class="tr val">Value</div>
        <div class="ramp"><i></i><div><span>High : 14.6613</span><span>Low : 0.350036</span></div></div>
      </div>
    </section>

    <section class="panel box2">
      <h2>ArcToolbox<svg class="pin"><use href="#i-pinh"/></svg><svg class="x"><use href="#i-x"/></svg></h2>
      <div class="tree">
        <div class="tr top"><svg><use href="#i-tbroot"/></svg><span>ArcToolbox</span></div>
        <div class="tr"><i class="tg"></i><svg><use href="#i-tb"/></svg><span>3D Analyst Tools</span></div>
        <div class="tr"><i class="tg"></i><svg><use href="#i-tb"/></svg><span>Analysis Tools</span></div>
        <div class="tr"><i class="tg"></i><svg><use href="#i-tb"/></svg><span>Cartography Tools</span></div>
        <div class="tr"><i class="tg"></i><svg><use href="#i-tb"/></svg><span>Conversion Tools</span></div>
        <div class="tr"><i class="tg"></i><svg><use href="#i-tb"/></svg><span>Data Interoperability Tools</span></div>
        <div class="tr"><i class="tg"></i><svg><use href="#i-tb"/></svg><span>Data Management Tools</span></div>
        <div class="tr"><i class="tg"></i><svg><use href="#i-tb"/></svg><span>Editing Tools</span></div>
        <div class="tr"><i class="tg"></i><svg><use href="#i-tb"/></svg><span>Geocoding Tools</span></div>
        <div class="tr"><i class="tg"></i><svg><use href="#i-tb"/></svg><span>Geostatistical Analyst Tools</span></div>
        <div class="tr"><i class="tg"></i><svg><use href="#i-tb"/></svg><span>Linear Referencing Tools</span></div>
        <div class="tr"><i class="tg"></i><svg><use href="#i-tb"/></svg><span>Multidimension Tools</span></div>
        <div class="tr"><i class="tg"></i><svg><use href="#i-tb"/></svg><span>Network Analyst Tools</span></div>
        <div class="tr"><i class="tg"></i><svg><use href="#i-tb"/></svg><span>Parcel Fabric Tools</span></div>
        <div class="tr long"><i class="tg minus"></i><svg><use href="#i-tb"/></svg><span>R.HydroTools.DisenoEstructuraEscalonadaFlujoRasa</span></div>
        <div class="tr child"><svg><use href="#i-model"/></svg><span>Estructura - Crear TIN y MDT Raster</span></div>
        <div class="tr"><i class="tg"></i><svg><use href="#i-tb"/></svg><span>Schematics Tools</span></div>
        <div class="tr"><i class="tg"></i><svg><use href="#i-tb"/></svg><span>Server Tools</span></div>
        <div class="tr"><i class="tg"></i><svg><use href="#i-tb"/></svg><span>Spatial Analyst Tools</span></div>
        <div class="tr"><i class="tg"></i><svg><use href="#i-tb"/></svg><span>Spatial Statistics Tools</span></div>
        <div class="tr"><i class="tg"></i><svg><use href="#i-tb"/></svg><span>Tracking Analyst Tools</span></div>
        <div class="hscroll"><i></i></div>
      </div>
    </section>

    <section class="view">
      <div class="viewtop">
        <svg id="map" class="map" viewBox="568 102 1313 890"></svg>
        <div class="vscroll"><i></i></div>
      </div>
      <div class="viewbar"><span class="vb sel"><svg><use href="#i-dv"/></svg></span><span class="vb"><svg><use href="#i-lv"/></svg></span><i class="vs"></i><span class="vb ref"><svg><use href="#i-ref"/></svg></span><span class="vb pause"><i></i><i></i></span><i class="line"></i></div>
    </section>

    <aside class="dock">
      <div class="tab h1"><svg><use href="#i-edsk"/></svg><span>Edit Sketch Properties</span></div>
      <div class="tab h2"><svg><use href="#i-idw"/></svg><span>Identify</span></div>
      <div class="tab h3"><svg><use href="#i-cat"/></svg><span>Catalog</span></div>
      <div class="tab h4"><svg><use href="#i-search"/></svg><span>Search</span></div>
      <div class="tab h5"><svg><use href="#i-cf"/></svg><span>Create Features</span></div>
    </aside>
  </main>
  <footer class="status"><span>-83.051&nbsp; -4.392 Decimal Degrees</span></footer>
</div>
<script src="map.js"></script>
</body>
</html>
```

FILE: styles.css
```css
* { box-sizing: border-box; }
html, body { margin: 0; height: 100%; overflow: hidden; }
body { font: 11.6px/18px "Open Sans", "Noto Sans", sans-serif; letter-spacing: -.13px; color: #000; background: #f0f0f0; }
i { font-style: normal; display: block; flex: none; }
svg { flex: none; display: block; }
.defs { position: absolute; }
.window { width: 1922px; height: 1033px; display: flex; flex-direction: column; border-left: 1px solid #707070; background: linear-gradient(90deg, #f0f0f0 0, #f2f2f2 35%, #fafafa 90%); }

.titlebar { height: 23px; background: #fff; display: flex; align-items: center; padding-left: 2px; }
.appicon { width: 17px; height: 17px; }
.title { color: #8f8f8f; margin-left: 4px; line-height: 22px; font-size: 12px; letter-spacing: -.36px; }
.winbtns { margin-left: auto; display: flex; gap: 35px; padding: 0 20px 3px 0; }
.winbtns svg { width: 11px; height: 11px; fill: none; stroke: #888; }

.menu { height: 26px; display: flex; padding-left: 12px; line-height: 26px; font-size: 12px; letter-spacing: -.25px; white-space: nowrap; }
.menu span { flex: none; }
.m1 { width: 34px; } .m2 { width: 36px; } .m3 { width: 41px; } .m4 { width: 75px; } .m5 { width: 45px; }
.m6 { width: 64px; } .m7 { width: 94px; } .m8 { width: 72px; } .m9 { width: 65px; }

.row { height: 25px; display: flex; }
.row2 { height: 26px; }
.tb { height: 25px; display: flex; align-items: center; background: linear-gradient(#fcfcfc, #f3f3f3); border-radius: 2px; }
.row1 .tb { height: 24px; }
.t11 { margin-left: 3px; width: 617px; } .t12 { margin-left: 3px; width: 417px; } .t13 { margin-left: 2px; width: 687px; }
.t21 { margin-left: 7px; width: 524px; } .t22 { margin-left: 24px; width: 174px; } .t23 { margin-left: 29px; width: 384px; }
.t24 { margin-left: 52px; width: 148px; } .t25 { margin-left: 3px; width: 505px; }
.grip { width: 3px; height: 15px; margin: 0 4px 0 2px; background: repeating-linear-gradient(#b8b8b8 0 2px, transparent 2px 4px); }
.t11 .grip { margin: 0 2px; } .t21 .grip { margin: 0 0 0 2px; } .t23 .grip, .t24 .grip { margin: 0 1px 0 3px; }
.b { width: 22px; height: 22px; padding: 3px; flex: none; }
.on { background: #dcebf7; border: 1px solid #0078d7; padding: 2px; }
.on.dim { background: #dde6ed; border-color: #9fb7c8; }
.s { width: 6px; height: 14px; background: linear-gradient(#bbb, #bbb) center/1px 100% no-repeat; }
.w5 { width: 5px; } .w7 { width: 7px; }
.c { width: 9px; height: 22px; }
.editor + .c, .snapping + .c, .t13 .c { width: 10px; }
.c::after { content: ""; display: block; margin: 10px auto 0; width: 0; border: 3px solid transparent; border-top-color: #000; border-bottom: 0; }
.c.off::after { border-top-color: #aaa; }
.g1 { margin-left: 1px; } .g2 { margin-left: 2px; } .g3 { margin-left: 3px; } .g4 { margin-left: 4px; }
.ov { width: 11px; height: 24px; margin-left: auto; background: linear-gradient(#f2f2f2, #bdbdbd 55%, #989898); padding: 15px 2px 0 3px; }
.ov::before { content: ""; display: block; width: 5px; height: 1px; background: #000; margin-bottom: 2px; }
.ov::after { content: ""; display: block; width: 0; border: 3px solid transparent; border-top-color: #000; border-bottom: 0; }
.lbl { font-size: 12px; letter-spacing: -.3px; white-space: nowrap; line-height: 22px; margin-left: 3px; flex: none; }
.editor { width: 32px; } .drawing { width: 44px; } .snapping { width: 51px; } .analyst { width: 57px; }

.combo { height: 21px; flex: none; background: #fff; border: 1px solid #7c7c7c; border-radius: 2px; display: flex; align-items: center; line-height: 17px; padding: 0 5px 2px 3px; }
.combo .chev { width: 6px; height: 6px; border: solid #777; border-width: 0 1px 1px 0; transform: translateY(-1px) rotate(45deg); margin-left: auto; }
.scale { width: 148px; margin-left: 8px; letter-spacing: 0; }
.font { width: 169px; } .size { width: 46px; margin-left: 2px; } .pct { width: 60px; height: 20px; border-color: #bbb; padding-left: 2px; } .num { width: 56px; height: 20px; padding-left: 2px; }
.pct .chev { border-color: #aaa; }
.otf { width: 13px; height: 14px; border: 1px solid #3f6ea8; background: #cfe0f3; font: italic bold 12px/12px "Liberation Serif", serif; color: #185f1a; text-align: center; margin-right: 4px; }
.hl { background: #0078d7; color: #fff; line-height: 14px; height: 14px; }
.pct .hl { color: #66788a; letter-spacing: -.5px; }
.tin { width: 179px; height: 19px; padding: 0; border: 2px solid #666; border-right-color: #ddd; border-bottom-color: #ddd; border-radius: 0; }
.tin svg { width: 14px; height: 14px; } .tin span { margin-left: 5px; letter-spacing: -.6px; }
.drop { width: 16px; height: 15px; margin-left: auto; background: #f0f0f0; border: 1px solid #888; border-left-color: #ddd; border-top-color: #ddd; padding: 5px 3px; }
.drop::after { content: ""; display: block; width: 0; border: 4px solid transparent; border-top-color: #000; border-bottom: 0; }
.ltr { font: bold 13px/17px "Liberation Serif", serif; text-align: center; letter-spacing: 0; color: #111; }
.big { font-size: 18px; line-height: 16px; }
.it { font-style: italic; } .un { text-decoration: underline; }
.clr { padding: 1px 2px 0; display: flex; flex-direction: column; align-items: center; }
.clr.ltr { font-size: 16px; line-height: 14px; padding-top: 2px; }
.clr svg { width: 16px; height: 14px; }
.clr::after { content: ""; width: 18px; height: 3px; margin-top: auto; margin-bottom: 1px; flex: none; }
.black::after { background: #000; } .yellow::after { background: #ffffb4; } .green::after { background: #5f0; }
.bluedot { width: 5px; height: 5px; border-radius: 50%; background: #00f; box-shadow: 0 0 0 .5px #003; margin-top: 5px; }
.xy { font: bold 9px/8px "Liberation Sans", sans-serif; color: #1f5e98; text-align: center; letter-spacing: .3px; padding: 2px 0 0; }
.xy i { width: 7px; height: 7px; border: 1.500px solid #1f5e98; border-radius: 50%; margin: 0 auto 2px; background: radial-gradient(#1f5e98 1px, #fff 1.500px); }

.work { height: 912px; display: flex; }
.panel { display: flex; flex-direction: column; height: 911px; flex: none; }
.panel h2 { margin: 0; height: 20px; font: inherit; font-size: 12px; line-height: 21px; letter-spacing: -.2px; padding: 0 4px; display: flex; align-items: flex-start; background: linear-gradient(90deg, #bfcddb, #d7e4f2); }
.pin { width: 9px; height: 11px; margin: 4px 7px 0 auto; } .x { width: 10px; height: 10px; margin-top: 5px; }
.toc { width: 238px; } .toc .tree { width: 237px; }
.toctools { height: 26px; background: linear-gradient(90deg, #f0f0f0, #fafafa); padding: 0 0 0 4px; display: flex; align-items: center; }
.tree { flex: 1; background: #fff; border: 1px solid #828790; padding-top: 1px; overflow: hidden; display: flex; flex-direction: column; }
.tr { height: 18px; flex: none; display: flex; align-items: center; white-space: nowrap; line-height: 18px; padding-left: 27px; }
.tr.root { padding-left: 8px; } .root b { font-weight: 700; margin-left: 5px; font-size: 11.6px; letter-spacing: -.25px; }
.lyr { width: 16px; height: 14px; margin-left: 6px; }
.tg { width: 9px; height: 9px; border: 1px solid #919191; border-radius: 1px; margin-top: 3px; background: linear-gradient(#25489b, #25489b) center/1px 5px no-repeat, linear-gradient(#25489b, #25489b) center/5px 1px no-repeat, #fafafa; }
.tg.minus { background: linear-gradient(#25489b, #25489b) center/5px 1px no-repeat, #fafafa; }
.ck { width: 11px; height: 11px; border: 1px solid #000; margin: 1px 6px 0 8px; background: #fff; }
.ck.on { padding: 0; }
.ck.on::after { content: ""; display: block; width: 3.500px; height: 6px; border: solid #000; border-width: 0 1.700px 1.700px 0; margin: 0 0 0 2.500px; transform: rotate(42deg); }
.toc .tr > span { padding: 0 2px; margin-top: -1px; }
.toc .tr > span.selrow { background: #0078d7; color: #fff; height: 18px; margin-top: 0; }
.sym { padding-left: 59px; } .dot { width: 11px; height: 11px; border-radius: 50%; background: #000; margin-top: 2px; }
.box { width: 15px; height: 11px; border: 1px solid #000; margin-top: 1px; } .thick { border-width: 3px; width: 17px; height: 13px; border-radius: 2px; margin-left: -1px; }
.val { padding-left: 82px; }
.ramp { display: flex; padding-left: 59px; height: 56px; }
.ramp > i { width: 13px; height: 36px; background: linear-gradient(#f5f5f5, #000); margin: 0 5px 0 0; }
.ramp div { display: flex; flex-direction: column; justify-content: space-between; height: 54px; margin-top: -3px; line-height: 18px; }
.box2 { width: 319px; margin-left: 4px; }
.box2 .tr { padding-left: 8px; } .box2 .tr.top { padding-left: 5px; } .top svg { width: 15px; height: 15px; margin-right: 5px; }
.box2 .tr:not(.top):not(.child) svg { width: 17px; height: 16px; margin: 0 4px 0 6px; }
.box2 .tr > span { margin-top: -1px; }
.box2 .long span { letter-spacing: -.16px; }
.box2 .tg { margin-top: 3px; } .box2 .child { padding-left: 42px; } .child svg { width: 16px; height: 16px; margin-right: 5px; }
.hscroll { margin-top: auto; height: 16px; background: #f0f0f0; padding: 7px 0 0 18px; } .hscroll i { width: 265px; height: 2px; background: #858585; }

.view { width: 1333px; margin-left: 4px; height: 911px; display: flex; flex: none; flex-direction: column; border-left: 2px solid #696969; }
.viewtop { height: 893px; display: flex; }
.map { width: 1313px; height: 893px; background: #fdfefe; border-top: 2px solid #696969; border-bottom: 1px solid #ddd; }
.vscroll { width: 16px; margin-left: 2px; border-left: 1px solid #fff; border-top: 2px solid #777; background: #f0f0f0; border-right: 1px solid #ddd; padding: 16px 0 0 4px; box-shadow: -2px 0 #e3e3e3; }
.vscroll i { width: 2px; height: 857px; background: #858585; }
.viewbar { height: 18px; background: #f0f0f0; border-bottom: 1px solid #ddd; display: flex; align-items: center; padding-bottom: 1px; }
.vb { width: 17px; height: 16px; padding: 3px 4px; } .vb svg { width: 9px; height: 10px; } .vb.sel { background: #cfe8fa; }
.vs { width: 1px; height: 14px; background: #bbb; margin: 0 4px 0 3px; }
.pause { display: flex; gap: 2px; padding: 5px; } .pause i { width: 2px; height: 6px; background: #2a5ca8; }
.line { width: 1200px; height: 2px; background: #858585; margin-left: 18px; }
.dock { width: 20px; margin-left: 2px; padding-top: 2px; flex: none; }
.tab { width: 20px; border: 1px solid #999; border-right: 0; border-radius: 3px 0 0 3px; margin-bottom: -1px; background: #f1f1f1; padding: 4px 0 0 1px; display: flex; flex-direction: column; align-items: flex-start; }
.tab svg { width: 16px; height: 16px; margin-bottom: 4px; }
.tab span { writing-mode: vertical-rl; font: 12px/17px "Liberation Sans", Arial, sans-serif; color: #747474; letter-spacing: 0; white-space: nowrap; }
.h1 { height: 149px; } .h2 { height: 68px; } .h3 { height: 72px; } .h4 { height: 68px; } .h5 { height: 118px; }
.status { height: 21px; background: #f0f0f0; padding: 0 0 0 1667px; line-height: 19px; letter-spacing: -.2px; border-top: 1px solid #fafafa; white-space: nowrap; }

#map text { font: 13.300px "Liberation Sans", Arial, sans-serif; fill: #fff; text-anchor: middle; letter-spacing: -.1px; }
.edge { stroke: #000; stroke-width: 1; fill: none; shape-rendering: crispEdges; }
.domain { fill: none; stroke: #000; stroke-width: 3; shape-rendering: crispEdges; }
.band { shape-rendering: crispEdges; }
.tag { fill: #343434; }
```

FILE: map.js
```js
// Draws the TIN: elevation bands, triangle edges, nodes and their height labels.
(function () {
  var svg = document.getElementById('map');
  var NS = 'http://www.w3.org/2000/svg';
  function add(name, attrs, text) {
    var e = document.createElementNS(NS, name);
    for (var k in attrs) e.setAttribute(k, attrs[k]);
    if (text) e.textContent = text;
    svg.appendChild(e);
  }
  var T = 352.5, A = 497.5, B = 598.5, D = 743.5, L = 628.5, R = 1820.5;
  var xs = [1093.5, 1122.5, 1151.5, 1180.5, 1210, 1239.5, 1268.5, 1297.5, 1326.5, 1355.5, 1365.5, 1384.5];

  // [right edge, colour]
  var outer = [[1093, '#749100'], [1101, '#8aa800'], [1114, '#9bb500'], [1126, '#a6be00'], [1140, '#b7c800'],
    [1151, '#c6d200'], [1166, '#d6da00'], [1181, '#e3e000'], [1192, '#e3d600'], [1205, '#e3ca00'], [1218, '#e3bc00'],
    [1231, '#e3ae00'], [1244, '#e3a200'], [1257, '#e39800'], [1270, '#e38c00'], [1283, '#e38200'], [1296, '#e37600'],
    [1309, '#e36900'], [1322, '#e35c00'], [1335, '#e35000'], [1348, '#e34000'], [1356, '#e33000'], [1384, '#c02a00'],
    [1522, '#c22900'], [1820, '#c41a00']];
  var inner = [[946, '#004a00'], [1093, '#144f00'], [1122, '#265a00'], [1151, '#3c6b00'], [1180, '#5a7d00'],
    [1210, '#749100'], [1239, '#90a200'], [1268, '#a6b100'], [1297, '#beb300'], [1326, '#c29e00'], [1355, '#c28c00'],
    [1442, '#c27a00'], [1740, '#c26e00'], [1820, '#c26100']];
  function bands(list, y, h) {
    var x = 628;
    list.forEach(function (b) {
      add('rect', { 'class': 'band', x: x, y: y, width: b[0] - x, height: h, fill: b[1] });
      x = b[0];
    });
  }
  bands(outer, 352, 145);
  bands(inner, 497, 101);
  bands(outer, 598, 145);

  function line(x1, y1, x2, y2, w) {
    add('path', { 'class': 'edge', d: 'M' + x1 + ' ' + y1 + 'L' + x2 + ' ' + y2, style: w ? 'stroke-width:' + w : '' });
  }
  line(L, A, R, A); line(L, B, R, B);
  xs.forEach(function (x, i) { line(x, T, x, D, i === 4 ? 2 : 0); });
  for (var i = 0; i < 10; i++) {
    line(xs[i], A, xs[i + 1], T);
    line(xs[i], D, xs[i + 1], B);
    line(xs[i], A, xs[i + 1], B);
  }
  line(xs[10], T, xs[11], A); line(xs[10], B, xs[11], D); line(xs[11], A, xs[10], B);
  line(L, T, xs[0], A); line(L, B, xs[0], A); line(L, D, xs[0], B);
  line(xs[11], A, R, T); line(xs[11], A, R, B); line(xs[11], D, R, B);
  add('rect', { 'class': 'domain', x: L, y: T, width: R - L, height: D - T });

  [T, A, B, D].forEach(function (y) {
    [L].concat(xs, [R]).forEach(function (x) { add('circle', { cx: x - 0.8, cy: y, r: 5.3 }); });
  });

  function tag(x, y, w, t, h) {
    add('rect', { 'class': 'tag', x: x, y: y, width: w, height: h || 23, rx: 2.5 });
    add('text', { x: x + w / 2 - 0.5, y: y + 15 }, t);
  }
  function side(y, h) {
    tag(633, y, 34, '5.01', h); tag(1826, y, 41, '14.67', h);
  }
  function outerTags(y, low, mid) {
    side(y, 22);
    [[1079, '5.01'], [1113, '7.01'], [1147, '8.01'], [1181, '9.01'], [1215, '9.01']].forEach(function (p) { tag(p[0], y, 34, p[1], 22); });
    [[1288, '13.01'], [1329, '14.01'], [1370, '14.01']].forEach(function (p) { tag(p[0], y, 42, p[1], 22); });
    [[1084, '6.01'], [1118, '6.01'], [1152, '7.01']].forEach(function (p) { tag(p[0], low, 34, p[1]); });
    [[1225, '11.01'], [1266, '12.01'], [1307, '13.01'], [1348, '14.01']].forEach(function (p) { tag(p[0], low, 41, p[1]); });
    tag(1186, mid, 34, '8.01'); tag(1389, mid, 42, '14.01');
  }
  outerTags(324, 357, 346);
  outerTags(715, 748, 737);
  function innerTags(y) {
    side(y, 23);
    tag(599, y, 34, '0.35'); tag(1785, y, 41, '11.65'); tag(1065, y, 34, '5.01'); tag(1065, y + 34, 34, '5.01');
    '234567899'.split('').forEach(function (n, i) { tag(1099 + 29 * i, y, 15, n); });
    '12345678'.split('').forEach(function (n, i) { tag(1099 + 29 * i, y + 23, 15, n); });
    tag(1349, y, 21, '11'); tag(1370, y, 22, '11');
    tag(1331, y + 23, 23, '10'); tag(1360, y + 23, 23, '10'); tag(1390, y + 23, 21, '11');
  }
  innerTags(469);
  innerTags(569);
})();
```
